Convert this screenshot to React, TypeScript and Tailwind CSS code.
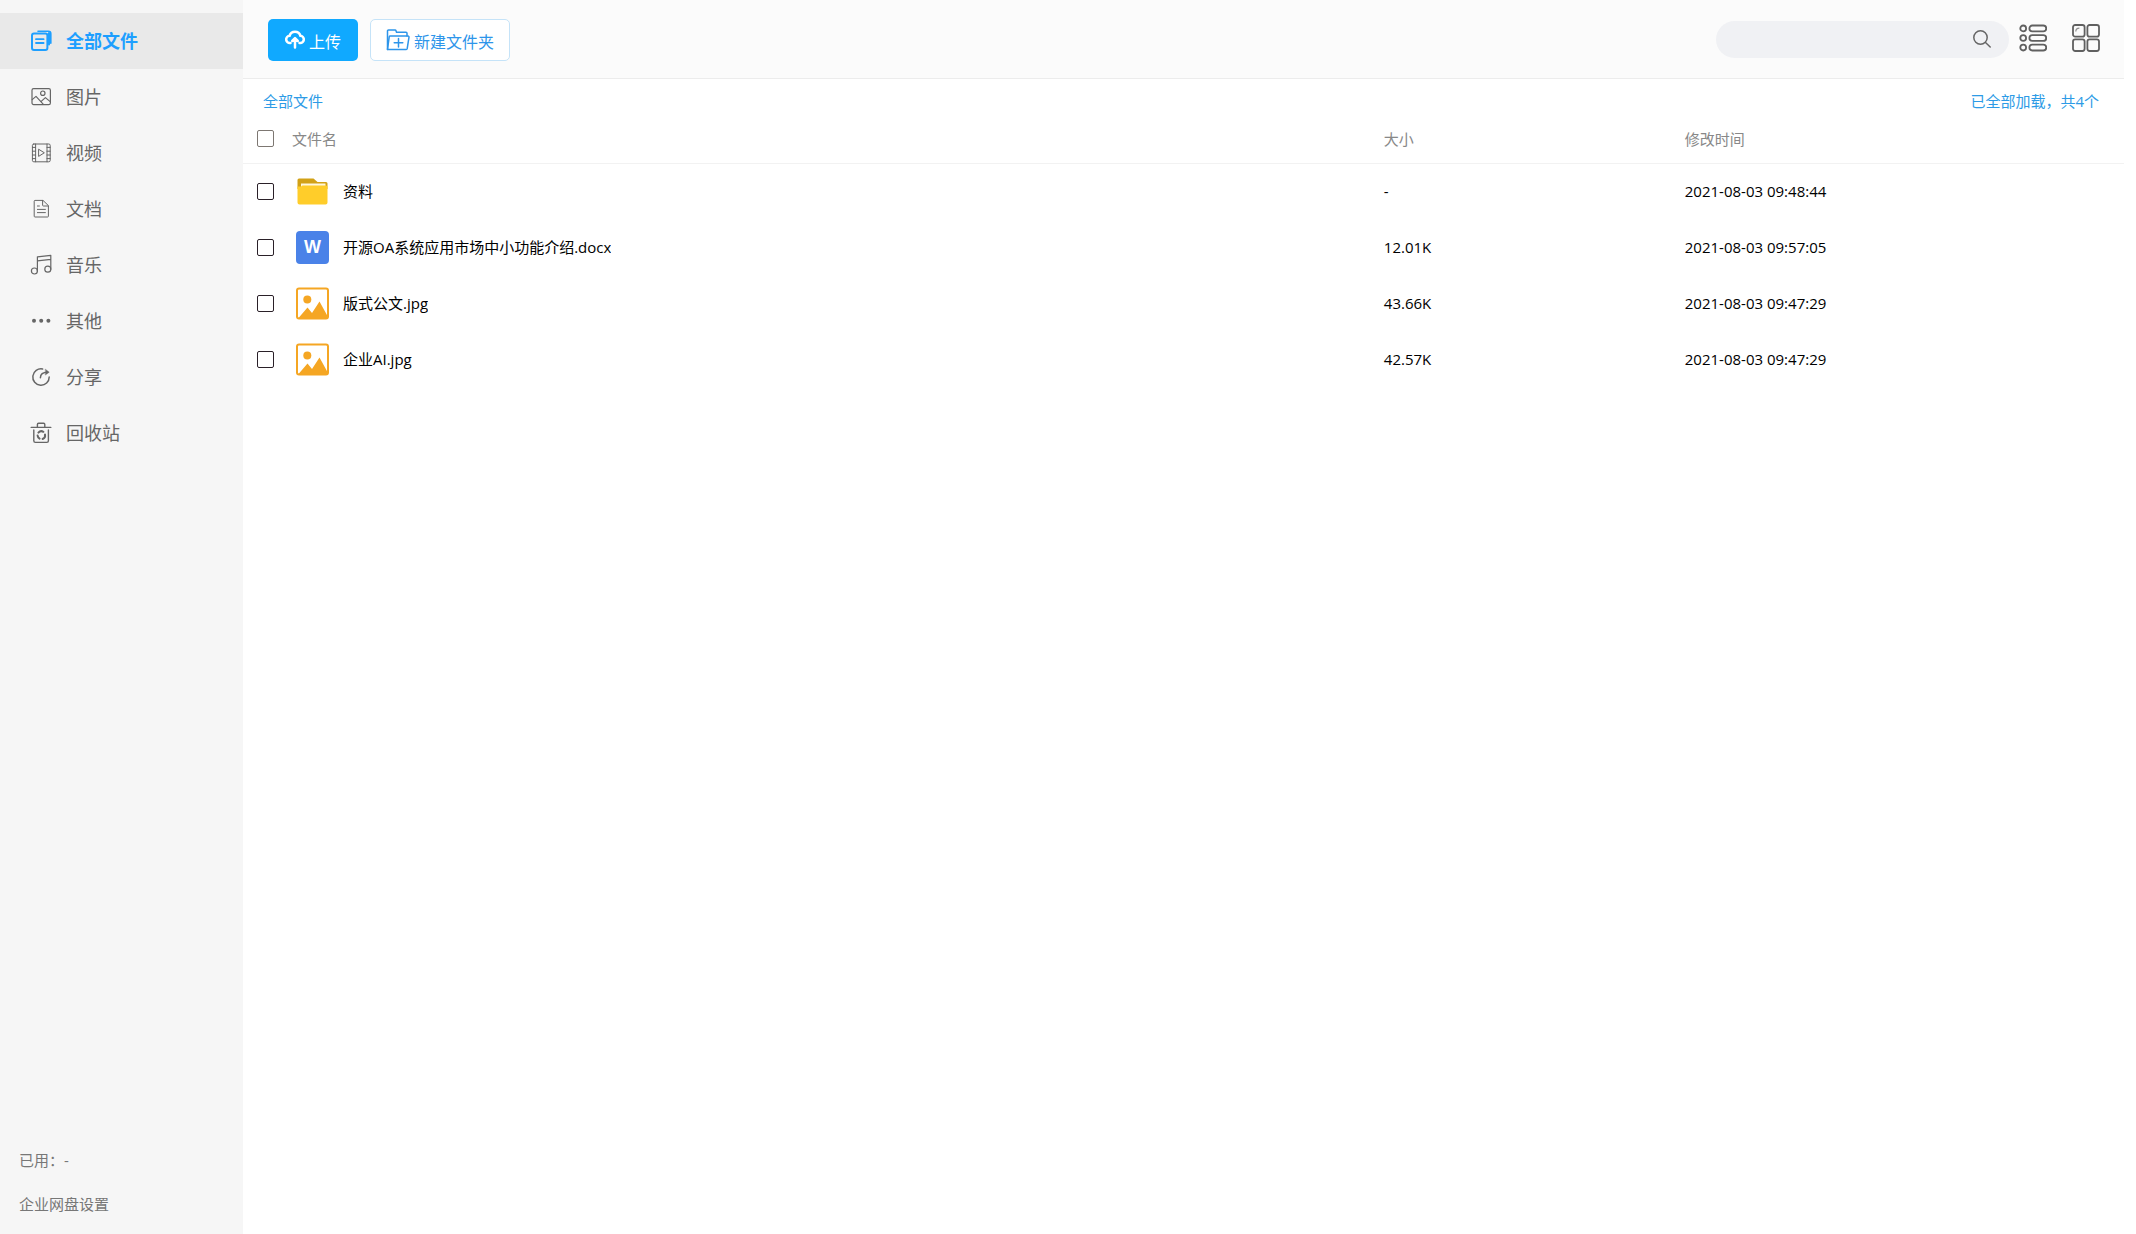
import { useState } from 'react';
import type { ReactNode } from 'react';

type FileItem = {
    id: number;
    name: string;
    kind: 'folder' | 'word' | 'image';
    size: string;
    modified: string;
};

const files: FileItem[] = [
    { id: 1, name: '资料', kind: 'folder', size: '-', modified: '2021-08-03 09:48:44' },
    { id: 2, name: '开源OA系统应用市场中小功能介绍.docx', kind: 'word', size: '12.01K', modified: '2021-08-03 09:57:05' },
    { id: 3, name: '版式公文.jpg', kind: 'image', size: '43.66K', modified: '2021-08-03 09:47:29' },
    { id: 4, name: '企业AI.jpg', kind: 'image', size: '42.57K', modified: '2021-08-03 09:47:29' },
];

// 22px line icon used in the sidebar
function NavIcon({ children, width = 1.2 }: { children: ReactNode; width?: number }) {
    return (
        <svg
            className="size-[22px] shrink-0"
            viewBox="0 0 22 22"
            fill="none"
            stroke="currentColor"
            strokeWidth={width}
            strokeLinecap="round"
            strokeLinejoin="round"
            aria-hidden="true"
        >
            {children}
        </svg>
    );
}

const navItems = [
    {
        key: 'all',
        label: '全部文件',
        icon: (
            <NavIcon width={2}>
                <rect x="2" y="3.6" width="15.4" height="16.4" rx="2" />
                <path d="M8 1.2h10.4a2.4 2.4 0 0 1 2.4 2.4v9.6" strokeWidth="1.6" />
                <path d="M19 3v11.6" strokeWidth="2" />
                <path d="M6 9.2h7.6M6 13h7.6" strokeWidth="1.8" />
            </NavIcon>
        ),
    },
    {
        key: 'image',
        label: '图片',
        icon: (
            <NavIcon>
                <rect x="2" y="2.6" width="18.4" height="16" rx="1.6" />
                <circle cx="12.8" cy="7.2" r="2.2" />
                <path d="M2.2 13.6 6 10.4l7.4 8M11.2 15.4l4.2-3.8 4.8 4" />
            </NavIcon>
        ),
    },
    {
        key: 'video',
        label: '视频',
        icon: (
            <NavIcon width={1}>
                <rect x="2.4" y="2" width="17.8" height="17.8" rx="1.4" />
                <path d="M5.6 2v17.8M17 2v17.8" />
                <path d="M2.4 5.4h3.2M2.4 9.2h3.2M2.4 13h3.2M2.4 16.6h3.2M17 5.4h3.2M17 9.2h3.2M17 13h3.2M17 16.6h3.2" />
                <path d="M8.6 7.6v6.8l5.4-3.4z" />
            </NavIcon>
        ),
    },
    {
        key: 'doc',
        label: '文档',
        icon: (
            <NavIcon width={1}>
                <path d="M12.6 2.4H5a.8.8 0 0 0-.8.8v15a.8.8 0 0 0 .8.8h12.6a.8.8 0 0 0 .8-.8V8z" />
                <path d="M12.6 2.4v4.8a.8.8 0 0 0 .8.8h5" />
                <path d="M7.4 8h2M7.4 11.4h8M7.4 14.6h8" />
            </NavIcon>
        ),
    },
    {
        key: 'music',
        label: '音乐',
        icon: (
            <NavIcon>
                <circle cx="4.4" cy="17" r="3" />
                <circle cx="17.8" cy="15.2" r="3" />
                <path d="M7.4 17V2.8l13.4-1.4v13.8M7.4 6.8l13.4-1.4" />
            </NavIcon>
        ),
    },
    {
        key: 'other',
        label: '其他',
        icon: (
            <NavIcon>
                <g fill="currentColor" stroke="none">
                    <circle cx="4" cy="10.8" r="2" />
                    <circle cx="11.2" cy="10.8" r="2" />
                    <circle cx="18.4" cy="10.8" r="2" />
                </g>
            </NavIcon>
        ),
    },
    {
        key: 'share',
        label: '分享',
        icon: (
            <NavIcon width={1.5}>
                <path d="M12.6 3A8.2 8.2 0 1 0 19.2 11" />
                <path d="M10.4 11.8c0-3.600 2.400-5.600 7-5.600" />
                <path d="M15.6 3.4 19.2 6.2l-3.6 2.6z" fill="currentColor" strokeWidth="0.5" />
            </NavIcon>
        ),
    },
    {
        key: 'trash',
        label: '回收站',
        icon: (
            <NavIcon width={1.4}>
                <path d="M1.2 5.4h19.6M7.4 5.2V2.4a1.2 1.2 0 0 1 1.2-1.2h5a1.2 1.2 0 0 1 1.2 1.2v2.8" />
                <path d="M3.8 8v10.8a1.6 1.6 0 0 0 1.6 1.6h11.4a1.6 1.6 0 0 0 1.6-1.6V8" />
                <path d="M8.4 10.6a4 4 0 0 1 5-.8M15 12.4a4 4 0 0 1-2.4 4.6M9.6 16.6a4 4 0 0 1-2-3" strokeWidth="2" />
            </NavIcon>
        ),
    },
];

function FileIcon({ kind }: { kind: FileItem['kind'] }) {
    if (kind === 'folder') {
        return (
            <svg className="size-[33px] shrink-0" viewBox="0 0 33 33" aria-hidden="true">
                <path d="M1.5 5a1.5 1.5 0 0 1 1.5-1.5h14.500l4 3.500H30a1.500 1.500 0 0 1 1.500 1.500V14h-30z" fill="#d2a116" />
                <path d="M5 8.5h24.500V14H5z" fill="#fff7dc" />
                <path d="M1.5 11.5H5l1.500-1H30a1.500 1.500 0 0 1 1.500 1.500v15.500a2 2 0 0 1-2 2h-26a2 2 0 0 1-2-2z" fill="#ffcd2a" />
            </svg>
        );
    }
    if (kind === 'word') {
        return (
            <span className="flex size-[33px] shrink-0 items-center justify-center rounded-sm bg-[#4a82e8] font-['Liberation_Sans'] text-lg font-bold text-white">
                W
            </span>
        );
    }
    return (
        <svg className="size-[33px] shrink-0" viewBox="0 0 33 33" aria-hidden="true">
            <rect x="1" y="1.5" width="31" height="30" rx="2" fill="#fff" stroke="#f5a623" strokeWidth="2" />
            <circle cx="11.3" cy="12.5" r="4" fill="#f5a623" />
            <path d="M2.5 31 11.5 20.5l4.500 5.500L23.500 14.500 31.500 29v2z" fill="#f5a623" />
        </svg>
    );
}

export default function App() {
    const [active, setActive] = useState('all');
    const [view, setView] = useState<'list' | 'grid'>('list');
    const [query, setQuery] = useState('');
    const [selected, setSelected] = useState<number[]>([]);

    const shown = files.filter((f) => f.name.toLowerCase().includes(query.toLowerCase()));

    const toggle = (id: number) =>
        setSelected((prev) => (prev.includes(id) ? prev.filter((i) => i !== id) : [...prev, id]));

    return (
        <div className="flex min-h-screen bg-white font-['Open_Sans','Noto_Sans_CJK_SC',sans-serif] text-[15px] leading-5 text-black">
            <aside className="flex w-[243px] shrink-0 flex-col justify-between bg-[#f6f6f6] pt-[13px] text-[#666]">
                <nav>
                    {navItems.map((item) => (
                        <button
                            key={item.key}
                            type="button"
                            onClick={() => setActive(item.key)}
                            className={`flex h-14 w-full items-center gap-3.5 pl-[30px] text-left text-lg ${
                                active === item.key ? 'bg-[#e9e9e9] font-bold text-[#1e9fff]' : ''
                            }`}
                        >
                            {item.icon}
                            <span>{item.label}</span>
                        </button>
                    ))}
                </nav>
                <div className="flex flex-col items-start gap-6 pb-5 pl-[19px] text-[#777]">
                    <p>已用：-</p>
                    <a href="#settings">企业网盘设置</a>
                </div>
            </aside>

            <main className="min-w-0 flex-1 pr-3">
                <header className="flex h-[79px] items-center justify-between border-b border-[#ececec] bg-[#fbfbfb] pr-6 pl-[25px]">
                    <div className="flex gap-3 pt-0.5">
                        <button type="button" className="flex h-[42px] items-center gap-1 rounded-[5px] bg-[#10a9ff] px-[17px] text-base text-white">
                            <svg
                                className="size-5"
                                viewBox="0 0 20 20"
                                fill="none"
                                stroke="currentColor"
                                strokeWidth="2.5"
                                strokeLinecap="round"
                                strokeLinejoin="round"
                                aria-hidden="true"
                            >
                                <path d="M5.5 13H5a3.600 3.600 0 0 1-.4-7.200 5.600 5.600 0 0 1 10.800 0A3.600 3.600 0 0 1 15 13h-.5" />
                                <path d="M10 17.500V9M7.200 11l2.800-2.800L12.800 11" />
                            </svg>
                            <span className="pt-1">上传</span>
                        </button>
                        <button type="button" className="flex h-[42px] items-center gap-1 rounded-[5px] border border-[#c5e3f8] bg-white px-[15px] text-base text-[#2d95ea]">
                            <svg
                                className="h-[22px] w-6"
                                viewBox="0 0 24 22"
                                fill="none"
                                stroke="currentColor"
                                strokeWidth="1.5"
                                strokeLinejoin="round"
                                strokeLinecap="round"
                                aria-hidden="true"
                            >
                                <path d="M1.5 20.5V2a1 1 0 0 1 1-1h6.500a1 1 0 0 1 1 .7l.5 1.600h9.500a1 1 0 0 1 1 1V7" />
                                <path d="M4 7h18a1 1 0 0 1 1 1.200l-1.800 11.500a1 1 0 0 1-1 .8H1.500L3.200 7.800A1 1 0 0 1 4 7z" />
                                <path d="M12.500 9.500v8.500M8.200 13.800h8.600" />
                            </svg>
                            <span className="pt-1">新建文件夹</span>
                        </button>
                    </div>

                    <div className="flex items-center">
                        <label className="flex h-[37px] w-[293px] items-center rounded-full bg-[#f0f1f4] pr-[18px] pl-5">
                            <input
                                type="text"
                                aria-label="search"
                                value={query}
                                onChange={(e) => setQuery(e.target.value)}
                                className="min-w-0 flex-1 bg-transparent outline-none"
                            />
                            <svg className="size-[18px] text-[#666]" viewBox="0 0 18 18" fill="none" stroke="currentColor" strokeWidth="1.5" strokeLinecap="round" aria-hidden="true">
                                <circle cx="7.5" cy="7.5" r="6.7" />
                                <path d="m12.500 12.500 4.700 4.500" />
                            </svg>
                        </label>
                        <button
                            type="button"
                            aria-label="list"
                            aria-pressed={view === 'list'}
                            onClick={() => setView('list')}
                            className="ml-2.5 pb-0.5 text-[#606060]"
                        >
                            <svg className="size-7" viewBox="0 0 28 28" fill="none" stroke="currentColor" strokeWidth="1.8">
                                <circle cx="4.2" cy="4.4" r="2.9" />
                                <circle cx="4.2" cy="14" r="2.9" />
                                <circle cx="4.2" cy="23.6" r="2.9" />
                                <rect x="10.4" y="1.5" width="16.8" height="5.8" rx="2.9" />
                                <rect x="10.4" y="11.1" width="16.8" height="5.8" rx="2.9" />
                                <rect x="10.4" y="20.7" width="16.8" height="5.8" rx="2.9" />
                            </svg>
                        </button>
                        <button
                            type="button"
                            aria-label="grid"
                            aria-pressed={view === 'grid'}
                            onClick={() => setView('grid')}
                            className="ml-[25px] pb-0.5 text-[#606060]"
                        >
                            <svg className="size-7" viewBox="0 0 28 28" fill="none" stroke="currentColor" strokeWidth="1.8">
                                <rect x="1" y="1" width="11.6" height="11.6" rx="2.2" />
                                <rect x="15.4" y="1" width="11.6" height="11.6" rx="2.2" />
                                <rect x="1" y="15.4" width="11.6" height="11.6" rx="2.2" />
                                <rect x="15.4" y="15.4" width="11.6" height="11.6" rx="2.2" />
                                <path d="M3.8 7.6c0-2.200 1.200-3.400 3.600-3.400" strokeWidth="1.2" opacity="0.7" />
                            </svg>
                        </button>
                    </div>
                </header>

                <div className="flex h-9 items-end justify-between pr-[25px] pb-1 pl-5 text-[#2d9be6]">
                    <a href="#all">全部文件</a>
                    <span>已全部加载，共{files.length}个</span>
                </div>

                <table className="w-full table-fixed text-left">
                    <thead>
                        <tr className="h-12 border-b border-[#f2f2f2] text-[#888]">
                            <th className="w-[49px] pl-3.5">
                                <input
                                    type="checkbox"
                                    aria-label="select all"
                                    checked={selected.length === files.length}
                                    onChange={(e) => setSelected(e.target.checked ? files.map((f) => f.id) : [])}
                                    className="block size-[17px] appearance-none rounded-xs border border-[#7d7772] bg-white checked:bg-[#1e9fff]"
                                />
                            </th>
                            <th className="font-normal">文件名</th>
                            <th className="w-[16%] font-normal">大小</th>
                            <th className="w-[23.35%] font-normal">修改时间</th>
                        </tr>
                    </thead>
                    <tbody>
                        {shown.map((f) => (
                            <tr key={f.id} className="h-14">
                                <td className="pl-3.5">
                                    <input
                                        type="checkbox"
                                        aria-label={f.name}
                                        checked={selected.includes(f.id)}
                                        onChange={() => toggle(f.id)}
                                        className="block size-[17px] appearance-none rounded-xs border border-[#2a2028] bg-white checked:bg-[#1e9fff]"
                                    />
                                </td>
                                <td className="pl-1">
                                    <div className="flex items-center gap-3.5">
                                        <FileIcon kind={f.kind} />
                                        <span className="truncate">{f.name}</span>
                                    </div>
                                </td>
                                <td>{f.size}</td>
                                <td>{f.modified}</td>
                            </tr>
                        ))}
                    </tbody>
                </table>
            </main>
        </div>
    );
}
